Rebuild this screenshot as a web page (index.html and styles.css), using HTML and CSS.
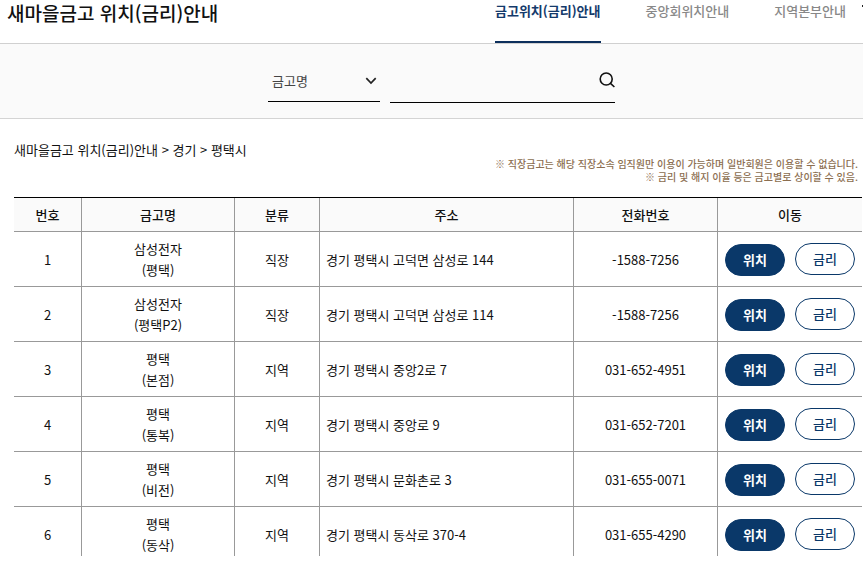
FILE: index.html
```
<!DOCTYPE html>
<html lang="ko">
<head>
  <meta charset="UTF-8" />
  <meta name="viewport" content="width=device-width, initial-scale=1.0"/>
  <title>새마을금고 위치(금리)안내</title>
  <link rel="stylesheet" href="styles.css">
</head>
<body>

<!-- Title and tabs -->
<header class="header">
  <h1>새마을금고 위치(금리)안내</h1>
  <nav class="tabs">
    <a href="#" class="active">금고위치(금리)안내</a>
    <a href="#">중앙회위치안내</a>
    <a href="#">지역본부안내</a>
  </nav>
  <span class="edge"></span>
</header>

<!-- Search -->
<form class="search" action="#">
  <div class="select-box">
    <select name="type" aria-label="검색구분">
      <option>금고명</option>
    </select>
    <svg class="arrow" width="12" height="8" viewBox="0 0 12 8"><path d="M1.3 1.2L6 6L10.7 1.2" fill="none" stroke="#222" stroke-width="1.7"/></svg>
  </div>
  <div class="search-box">
    <input type="text" name="keyword" aria-label="검색어">
    <button type="submit" aria-label="검색">
      <svg width="16" height="16" viewBox="0 0 16 16"><g fill="none" stroke="#111" stroke-width="1.6"><circle cx="7.2" cy="7" r="6"/><path d="M11.2 11.2L15.4 15"/></g></svg>
    </button>
  </div>
</form>

<!-- Result list -->
<main class="content">
  <div class="info">
    <p class="path">새마을금고 위치(금리)안내 &gt; 경기 &gt; 평택시</p>
    <p class="notice">※ 직장금고는 해당 직장소속 임직원만 이용이 가능하며 일반회원은 이용할 수 없습니다.<br>※ 금리 및 해지 이율 등은 금고별로 상이할 수 있음.</p>
  </div>

  <div class="list">
    <table>
      <colgroup>
        <col class="col-no"><col class="col-name"><col class="col-type"><col><col class="col-tel"><col class="col-move">
      </colgroup>
      <thead>
        <tr><th>번호</th><th>금고명</th><th>분류</th><th>주소</th><th>전화번호</th><th>이동</th></tr>
      </thead>
      <tbody>
        <tr>
          <td>1</td><td>삼성전자<br>(평택)</td><td>직장</td><td class="addr">경기 평택시 고덕면 삼성로 144</td><td>-1588-7256</td>
          <td><div class="btns"><button type="button" class="btn fill">위치</button><button type="button" class="btn line">금리</button></div></td>
        </tr>
        <tr>
          <td>2</td><td>삼성전자<br>(평택P2)</td><td>직장</td><td class="addr">경기 평택시 고덕면 삼성로 114</td><td>-1588-7256</td>
          <td><div class="btns"><button type="button" class="btn fill">위치</button><button type="button" class="btn line">금리</button></div></td>
        </tr>
        <tr>
          <td>3</td><td>평택<br>(본점)</td><td>지역</td><td class="addr">경기 평택시 중앙2로 7</td><td>031-652-4951</td>
          <td><div class="btns"><button type="button" class="btn fill">위치</button><button type="button" class="btn line">금리</button></div></td>
        </tr>
        <tr>
          <td>4</td><td>평택<br>(통복)</td><td>지역</td><td class="addr">경기 평택시 중앙로 9</td><td>031-652-7201</td>
          <td><div class="btns"><button type="button" class="btn fill">위치</button><button type="button" class="btn line">금리</button></div></td>
        </tr>
        <tr>
          <td>5</td><td>평택<br>(비전)</td><td>지역</td><td class="addr">경기 평택시 문화촌로 3</td><td>031-655-0071</td>
          <td><div class="btns"><button type="button" class="btn fill">위치</button><button type="button" class="btn line">금리</button></div></td>
        </tr>
        <tr>
          <td>6</td><td>평택<br>(동삭)</td><td>지역</td><td class="addr">경기 평택시 동삭로 370-4</td><td>031-655-4290</td>
          <td><div class="btns"><button type="button" class="btn fill">위치</button><button type="button" class="btn line">금리</button></div></td>
        </tr>
      </tbody>
    </table>
  </div>
</main>

</body>
</html>
```
FILE: styles.css
```
* { box-sizing: border-box; }

body {
  margin: 0;
  font-family: "Noto Sans CJK KR", sans-serif;
  font-size: 13px;
  line-height: 21px;
  color: #111;
  background-color: #fff;
}

h1, p { margin: 0; }

button, input, select {
  font-family: inherit;
  font-size: 13px;
}

.header {
  display: flex;
  border-bottom: 1px solid #d0d0d0;
}

.header h1 {
  flex: 1;
  padding-left: 7px;
  font-size: 19px;
  line-height: 25px;
  font-weight: 500;
}

.tabs {
  display: flex;
  gap: 45px;
}

.tabs a {
  padding-bottom: 20px;
  border-bottom: 2px solid transparent;
  color: #888;
  font-weight: 500;
  text-decoration: none;
  white-space: nowrap;
}

.tabs .active {
  color: #143a6b;
  border-bottom-color: #0c2f5c;
  font-weight: 700;
}

.edge {
  width: 1px;
  height: 2px;
  margin: 5px 0 0 16px;
  background-color: #222;
}

.search {
  display: flex;
  justify-content: center;
  align-items: flex-start;
  gap: 10px;
  padding: 20px 0 15px 20px;
  background-color: #fafafa;
  border-bottom: 1px solid #d4d4d4;
}

.select-box {
  position: relative;
  width: 112px;
}

.select-box select {
  display: block;
  width: 100%;
  height: 38px;
  padding: 0 4px 4px;
  border: 0;
  border-bottom: 1px solid #000;
  border-radius: 0;
  background: none;
  color: #444;
  appearance: none;
}

.arrow {
  position: absolute;
  top: 13px;
  right: 3px;
  pointer-events: none;
}

.search-box {
  display: flex;
  align-items: flex-start;
  width: 225px;
  height: 39px;
  border-bottom: 1px solid #000;
}

.search-box input {
  flex: 1;
  min-width: 0;
  height: 36px;
  border: 0;
  background: none;
}

.search-box button {
  height: 32px;
  padding: 0;
  border: 0;
  background: none;
  cursor: pointer;
}

.search-box svg { display: block; }

.content { padding: 20px 1px 0 14px; }

.info {
  display: flex;
  justify-content: space-between;
  padding-right: 4px;
  margin-bottom: 14px;
}

.notice {
  padding-top: 18px;
  font-size: 10px;
  line-height: 13px;
  font-weight: 500;
  color: #8c6e50;
  text-align: right;
}

/* list panel, the rows past its height are hidden */
.list {
  max-height: 359px;
  overflow: hidden;
}

table {
  width: 100%;
  table-layout: fixed;
  border-collapse: separate;
  border-spacing: 0;
  border-top: 1px solid #000;
}

.col-no { width: 68px; }
.col-name { width: 153px; }
.col-type { width: 85px; }
.col-tel { width: 144px; }
.col-move { width: 144px; }

th, td {
  padding: 6px 0;
  border-right: 1px solid #999;
  border-bottom: 1px solid #999;
  text-align: center;
}

th:last-child, td:last-child { border-right: 0; }

th {
  background-color: #fafafa;
  font-weight: 500;
}

.addr {
  padding-left: 6px;
  text-align: left;
}

.btns {
  display: flex;
  justify-content: center;
  gap: 10px;
}

.btn {
  width: 60px;
  height: 32px;
  padding: 0;
  border: 1px solid #0a3869;
  border-radius: 16px;
  cursor: pointer;
}

.fill {
  margin-top: 1px;
  background-color: #0a3869;
  color: #fff;
  font-weight: 700;
}

.line {
  background-color: #fff;
  color: #0a3869;
  font-weight: 500;
}
```
